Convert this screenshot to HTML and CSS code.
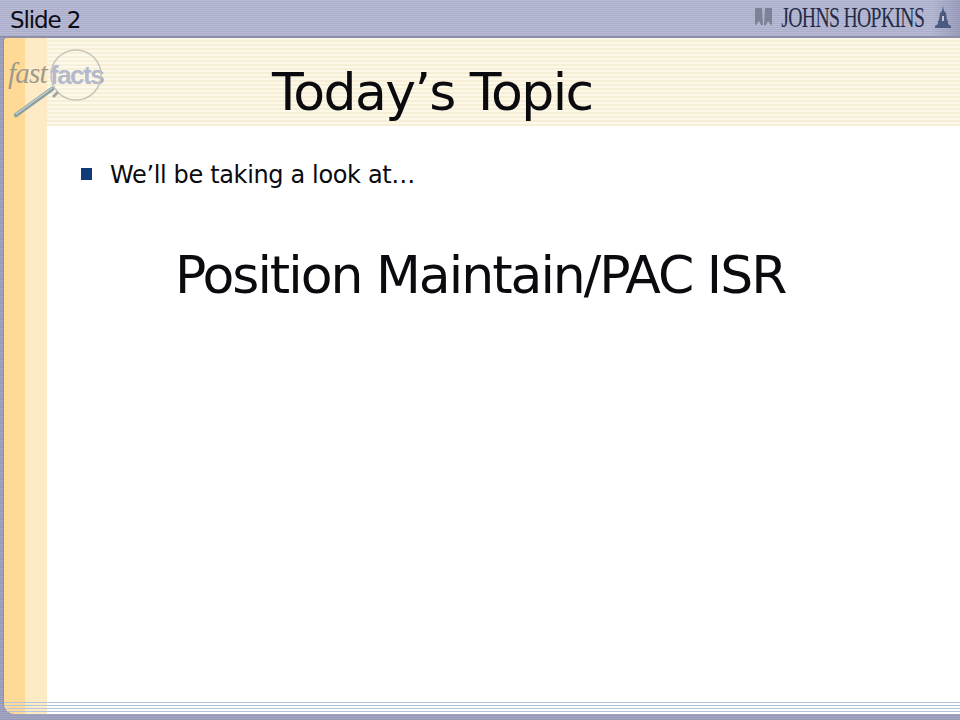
FILE: index.html
```html
<!DOCTYPE html>
<html lang="en">
<head>
<meta charset="utf-8">
<title>Slide 2</title>
<link rel="stylesheet" href="styles.css">
</head>
<body>
<div class="slide">
  <header class="topbar">
    <span class="slide-no">Slide 2</span>
    <div class="brand">
      <svg class="shield" width="18" height="20" viewBox="0 0 18 20"><path d="M0 1h7l1 17H6L4 14 1 18H0zM10 1h7v17h-1l-3-4-2 4h-2z" fill="#7d8298"/></svg>
      <span class="brand-name">JOHNS HOPKINS</span>
      <svg class="dome" width="16" height="22" viewBox="0 0 16 22"><path d="M8 0l1 5 2 2 1 7 1 1v3l3 2v2H0v-2l3-2v-3l1-1 1-7 2-2z" fill="#4a5a80"/><path d="M7 10h2v5H7z" fill="#c4c8da"/></svg>
    </div>
  </header>
  <div class="body">
    <div class="panel">
      <aside class="rail"><div class="rail-dark"></div><div class="rail-light"></div></aside>
      <main class="content">
        <div class="band"><h1 class="title">Today’s Topic</h1></div>
        <ul class="bullets"><li>We’ll be taking a look at…</li></ul>
        <p class="big">Position Maintain/PAC ISR</p>
      </main>
      <div class="foot-lines"></div>
    </div>
  </div>
  <div class="logo">
    <span class="fast">fast</span><span class="facts">facts</span>
    <svg class="glass" width="110" height="90" viewBox="0 0 110 90"><circle cx="68" cy="30" r="25" fill="#ffffff" fill-opacity=".15" stroke="#c4c3bb" stroke-width="1.500"/><path d="M50 47L45 52" stroke="#a9a79c" stroke-width="3"/><path d="M44 44L8 70" stroke="#8ba0a0" stroke-width="4.500" stroke-linecap="round"/><path d="M44 43L8 69" stroke="#c8d2d0" stroke-width="1.200" stroke-linecap="round"/></svg>
  </div>
</div>
</body>
</html>
```
FILE: styles.css
```css
* { box-sizing: border-box; }
html, body { margin: 0; padding: 0; }
body { width: 960px; height: 720px; overflow: hidden; background: #fff; font-family: "DejaVu Sans", sans-serif; color: #0a0a0f; }
.slide { position: relative; width: 960px; height: 720px; display: flex; flex-direction: column; background: #a9adc9; }
.topbar { height: 38px; flex: none; display: flex; align-items: center; justify-content: space-between; padding: 0 9px 2px 10px;
  background: linear-gradient(90deg, transparent 97%, rgba(110,110,150,.35)), repeating-linear-gradient(180deg, #b9bcd4 0 1px, #a9adc9 1px 2px); border-bottom: 2px solid #8f8fa8; }
.slide-no { font-size: 23px; letter-spacing: -1.1px; color: #0c0c18; margin-top: 5px; }
.brand { display: flex; align-items: center; gap: 10px; }
.brand-name { font-family: "Liberation Serif", serif; font-size: 29px; letter-spacing: -1px; color: #262c48; line-height: 1; transform: scaleX(.68); transform-origin: right center; margin-left: -69px; }
.dome { margin-left: 1px; }
.body { flex: 1; min-height: 0; padding: 0 0 6px 4px; background: repeating-linear-gradient(180deg, #a4a8c4 0 1px, #9598b6 1px 2px); }
.panel { position: relative; height: 100%; display: flex; overflow: hidden; border-radius: 3px 0 0 10px; box-shadow: -1px 0 1px #8f8fa8; }
.rail { width: 43px; flex: none; display: flex; }
.rail-dark { width: 21px; background: #ffd996; }
.rail-light { width: 22px; background: #ffeac6; }
.content { flex: 1; min-width: 0; background: #fff; display: flex; flex-direction: column; }
.band { height: 88px; flex: none; background: repeating-linear-gradient(180deg, #fdf9e8 0 2px, #f6eed6 2px 4px); display: flex; align-items: center; padding: 20px 0 0 225px; }
.title { margin: 0; font-size: 52px; font-weight: 400; letter-spacing: -1.6px; line-height: 1; white-space: nowrap; }
.bullets { list-style: none; margin: 34px 0 0; padding: 0 0 0 63px; font-size: 24px; letter-spacing: -.35px; line-height: 30px; }
.bullets li::before { content: ""; display: inline-block; width: 11px; height: 12px; margin: 0 18px 5px -29px; background: #0f3c78; vertical-align: middle; }
.big { margin: 55px 0 0 128px; font-size: 52px; letter-spacing: -2px; line-height: 60px; white-space: nowrap; }
.foot-lines { position: absolute; left: 0; right: 0; bottom: 0; height: 12px; background: repeating-linear-gradient(180deg, #b4c4de 0 1px, transparent 1px 3px); }
.logo { position: absolute; left: 8px; top: 45px; width: 100px; height: 76px; }
.fast { position: absolute; left: 0; top: 12px; font-family: "Liberation Serif", serif; font-style: italic; font-size: 29px; letter-spacing: -.8px; color: #9c9a8c; }
.facts { position: absolute; left: 42px; top: 15px; font-family: "Liberation Sans", sans-serif; font-weight: 700; font-size: 26px; letter-spacing: -1.5px; color: #a9adc4; }
.glass { position: absolute; left: 0; top: 0; }
```
